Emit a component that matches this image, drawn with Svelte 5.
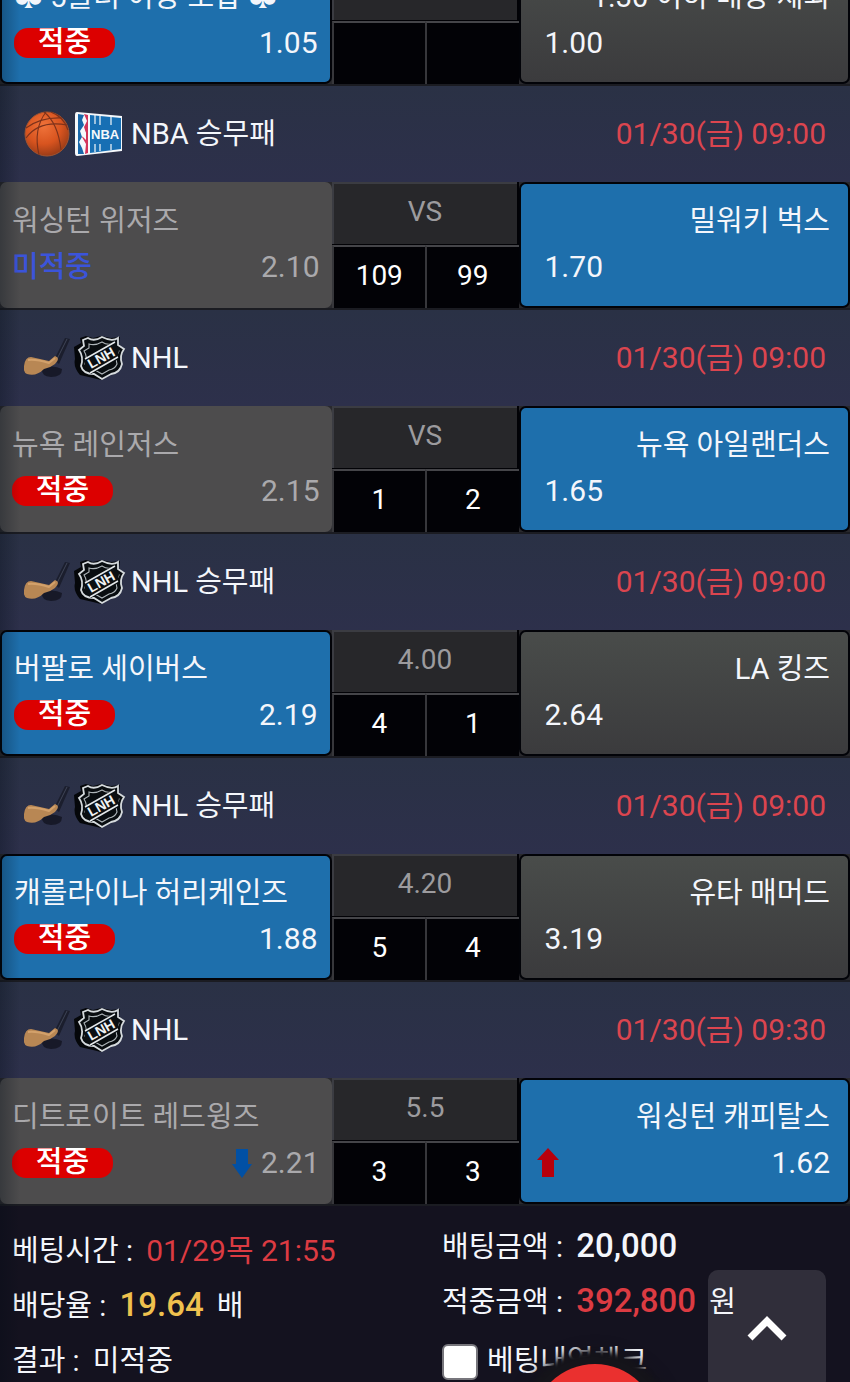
<script lang="ts">
    type Side = {
        name: string;
        odds: string;
        state: 'picked' | 'idle' | 'dimmed';
        result?: 'hit' | 'miss';
        trend?: 'up' | 'down';
    };

    type Game = {
        league?: string;
        sport?: 'basketball' | 'hockey';
        time?: string;
        home: Side;
        away: Side;
        middle: string;
        score: [string, string];
    };

    const games: Game[] = [
        {
            home: { name: '♣ 5폴더 이상 조합 ♣', odds: '1.05', state: 'picked', result: 'hit' },
            away: { name: '1.30 이하 배당 제외', odds: '1.00', state: 'idle' },
            middle: '',
            score: ['', '']
        },
        {
            league: 'NBA 승무패',
            sport: 'basketball',
            time: '01/30(금) 09:00',
            home: { name: '워싱턴 위저즈', odds: '2.10', state: 'dimmed', result: 'miss' },
            away: { name: '밀워키 벅스', odds: '1.70', state: 'picked' },
            middle: 'VS',
            score: ['109', '99']
        },
        {
            league: 'NHL',
            sport: 'hockey',
            time: '01/30(금) 09:00',
            home: { name: '뉴욕 레인저스', odds: '2.15', state: 'dimmed', result: 'hit' },
            away: { name: '뉴욕 아일랜더스', odds: '1.65', state: 'picked' },
            middle: 'VS',
            score: ['1', '2']
        },
        {
            league: 'NHL 승무패',
            sport: 'hockey',
            time: '01/30(금) 09:00',
            home: { name: '버팔로 세이버스', odds: '2.19', state: 'picked', result: 'hit' },
            away: { name: 'LA 킹즈', odds: '2.64', state: 'idle' },
            middle: '4.00',
            score: ['4', '1']
        },
        {
            league: 'NHL 승무패',
            sport: 'hockey',
            time: '01/30(금) 09:00',
            home: { name: '캐롤라이나 허리케인즈', odds: '1.88', state: 'picked', result: 'hit' },
            away: { name: '유타 매머드', odds: '3.19', state: 'idle' },
            middle: '4.20',
            score: ['5', '4']
        },
        {
            league: 'NHL',
            sport: 'hockey',
            time: '01/30(금) 09:30',
            home: { name: '디트로이트 레드윙즈', odds: '2.21', state: 'dimmed', result: 'hit', trend: 'down' },
            away: { name: '워싱턴 캐피탈스', odds: '1.62', state: 'picked', trend: 'up' },
            middle: '5.5',
            score: ['3', '3']
        }
    ];

    let checked = $state(false);

    function scrollToTop() {
        window.scrollTo({ top: 0, behavior: 'smooth' });
    }
</script>

{#snippet arrow(trend: 'up' | 'down')}
    <svg class="arrow" width="22" height="30" viewBox="0 0 22 30" aria-hidden="true">
        {#if trend === 'up'}
            <path d="M11 0 L22 12 H17 V29 H5 V12 H0 Z" fill="#b8000c" />
        {:else}
            <path d="M5 1 H17 V16 H21 L11 30 L1 16 H5 Z" fill="#0150a4" />
        {/if}
    </svg>
{/snippet}

{#snippet sportIcons(sport: 'basketball' | 'hockey')}
    {#if sport === 'basketball'}
        <svg width="46" height="46" viewBox="0 0 46 46" aria-hidden="true">
            <defs>
                <radialGradient id="ball" cx="42%" cy="32%" r="68%">
                    <stop offset="0" stop-color="#f0733a" />
                    <stop offset="0.6" stop-color="#d8541f" />
                    <stop offset="1" stop-color="#9c3c17" />
                </radialGradient>
            </defs>
            <circle cx="23" cy="23" r="22" fill="url(#ball)" stroke="#a35430" />
            <g fill="none" stroke="#7d321b" stroke-width="1.1">
                <path d="M2 17 Q17 6 38 7" />
                <path d="M20 1 Q34 12 37 39" />
                <path d="M22 1 Q9 18 15 44" />
                <path d="M2 27 Q15 9 43 14" />
                <path d="M27 1 Q40 6 44 19" />
            </g>
        </svg>
        <svg width="50" height="46" viewBox="0 0 50 46" aria-hidden="true">
            <path d="M3 1 L48 5 V40 L3 45 Q1 45 1 42 V4 Q1 1 3 1 Z" fill="#f5f8fb" />
            <path d="M4 3 L10 4 L8 9 L10 14 L6 20 L8 26 L5 31 L8 37 L10 43 L4 43 Z" fill="#1767aa" />
            <path d="M10 3 L14 4 V42 L11 43 L12 33 L8 26 L12 22 L10 16 L13 10 Z" fill="#d3345a" />
            <path d="M12 21 L8 25 L12 29 Z" fill="#f5f8fb" />
            <path d="M16 4 L47 7 V38 L16 42 Z" fill="#176fb4" />
            <path d="M21 4 V13 M26 5 V14 M37 6 V14 M21 33 V41 M26 33 V40 M37 33 V39" stroke="#f5f8fb" stroke-width="1.2" />
            <text x="17" y="28" class="nba-text">NBA</text>
        </svg>
    {:else}
        <svg width="46" height="46" viewBox="0 0 46 46" aria-hidden="true">
            <path d="M41 3 L46 4 L35 29 L30 25 Z" fill="#1b1e2d" />
            <path d="M43 4 L33 24" stroke="#3f4557" />
            <path d="M18 34 Q28 29 38 34 Q38 42 27 42 Q17 41 18 34 Z" fill="#171928" />
            <path d="M0 31 Q1 22 7 22 L25 26 L31 21 Q37 23 31 29 Q26 33 20 34 Q12 42 3 39 Q-1 37 0 31 Z" fill="#b88754" />
            <path d="M4 25 Q12 24 25 28 L31 23" fill="none" stroke="#d3a16b" stroke-width="2" />
        </svg>
        <svg width="52" height="46" viewBox="0 0 52 46" aria-hidden="true">
            <path d="M12 1 L19 3 L27 1 L37 3 L46 2 L45 9 L50 15 Q45 22 48 29 Q47 38 36 40 L27 45 L19 43 L6 40 Q-1 32 1 24 L0 12 L7 8 L6 3 Z" fill="#05070a" />
            <path d="M14 3 Q20 7 28 2 Q38 7 44 3 L44 10 L50 14 Q45 21 48 29 Q46 38 37 39 L28 44 L20 39 Q9 39 7 31 Q10 22 5 15 L10 11 L9 5 Z" fill="#090d10" stroke="#d5dadd" stroke-width="1.8" />
            <path d="M15 9 Q21 11 28 7 Q34 11 40 8 L40 13 L45 16 Q41 23 43 29 Q41 34 35 35 L28 39 L21 35 Q13 34 11 29 Q14 22 10 16 L15 13 Z" fill="none" stroke="#aeb5b9" stroke-width="1.1" />
            <path d="M11 24 L40 6 L45 15 L43 25 L17 39 L11 33 Z" fill="#0b0f12" />
            <path d="M11 24 L41 7 M16 38 L44 22" stroke="#e5e9eb" stroke-width="1.5" />
            <text x="17" y="34" transform="rotate(-29 17 34)" class="nhl-text">LNH</text>
        </svg>
    {/if}
{/snippet}

<main class="page">
    <section class="games">
        {#each games as game}
            <article class="game">
                {#if game.sport}
                    <header class="game-header">
                        <div class="icons">{@render sportIcons(game.sport)}</div>
                        <h2>{game.league}</h2>
                        <time>{game.time}</time>
                    </header>
                {/if}

                <div class="odds-row">
                    <div class="side home {game.home.state}">
                        <div class="name">{game.home.name}</div>
                        <div class="line">
                            {#if game.home.result === 'hit'}
                                <span class="hit">적중</span>
                            {:else if game.home.result === 'miss'}
                                <span class="miss">미적중</span>
                            {/if}
                            <span class="odds">
                                {#if game.home.trend}{@render arrow(game.home.trend)}{/if}
                                {game.home.odds}
                            </span>
                        </div>
                    </div>

                    <div class="center">
                        <div class="middle">{game.middle}</div>
                        <div class="score">{game.score[0]}</div>
                        <div class="score">{game.score[1]}</div>
                    </div>

                    <div class="side away {game.away.state}">
                        <div class="name">{game.away.name}</div>
                        <div class="line" class:moved={game.away.trend}>
                            {#if game.away.trend}{@render arrow(game.away.trend)}{/if}
                            <span class="odds">{game.away.odds}</span>
                        </div>
                    </div>
                </div>
            </article>
        {/each}
    </section>

    <footer class="summary">
        <div class="summary-left">
            <p>베팅시간 : <span class="red date">01/29목 21:55</span></p>
            <p>배당율 : <strong class="yellow">19.64</strong> <span>배</span></p>
            <p>결과 : <span>미적중</span></p>
        </div>
        <div class="summary-right">
            <p>배팅금액 : <strong>20,000</strong></p>
            <p>적중금액 : <strong class="red">392,800</strong> <span>원</span></p>
            <label>
                <input type="checkbox" bind:checked />
                베팅내역체크
            </label>
        </div>
    </footer>

    <button class="to-top" type="button" aria-label="맨 위로" onclick={scrollToTop}>
        <svg width="40" height="26" viewBox="0 0 40 26" aria-hidden="true">
            <path d="M3 22 L20 5 L37 22" fill="none" stroke="#fff" stroke-width="7" />
        </svg>
    </button>
    <button class="round" type="button" aria-label="메뉴"></button>
</main>

<style>
    :global(body) {
        background: #14121f;
    }

    .page {
        position: relative;
        height: 100vh;
        overflow: hidden;
        background: #14121f;
        color: #f4f6fb;
        font-family: Roboto, "Noto Sans CJK KR", sans-serif;
        font-size: 29px;
    }

    /* soft shade along the left screen edge */
    .page::after {
        content: '';
        position: absolute;
        inset: 0 auto 0 0;
        width: 20px;
        background: linear-gradient(90deg, rgba(0, 10, 20, 0.28), transparent);
        pointer-events: none;
    }

    /* the list is scrolled part way past its first row */
    .games {
        margin-top: -42px;
    }

    .game-header {
        display: flex;
        align-items: center;
        height: 96px;
        padding: 0 24px;
        background: linear-gradient(#2a3145, #2d304b);
    }

    .icons {
        display: flex;
        gap: 4px;
        width: 100px;
    }

    .icons svg {
        display: block;
        flex: none;
    }

    .nba-text {
        font: bold 13px "Liberation Sans", sans-serif;
        fill: #f5f8fb;
    }

    .nhl-text {
        font: bold 14px "Liberation Sans", sans-serif;
        fill: #f0f2f3;
    }

    h2 {
        margin: 0 0 0 7px;
        font-size: 29px;
        font-weight: 400;
        line-height: 38px;
    }

    time {
        margin-left: auto;
        color: #db454f;
        font-size: 30px;
        line-height: 38px;
    }

    .odds-row {
        display: grid;
        grid-template-columns: 39fr 22fr 39fr;
        height: 126px;
        border-bottom: 2px solid #1b1c22;
        background: #29292d;
    }

    .side {
        box-sizing: border-box;
        padding: 14px 12px 0;
        border: 2px solid #020308;
        border-radius: 7px;
        line-height: 46px;
        white-space: nowrap;
    }

    .picked {
        background: #1e6fac;
    }

    .idle {
        background: linear-gradient(#494c4a, #3b3b3d);
    }

    .dimmed {
        padding-top: 16px;
        border: 0;
        background: #4d4c4d;
        color: #aaa9ac;
    }

    .line {
        display: flex;
        align-items: center;
        justify-content: space-between;
        height: 46px;
    }

    .odds {
        font-size: 30px;
    }

    .away {
        padding-right: 18px;
        padding-left: 16px;
    }

    .away .name {
        text-align: right;
    }

    .away .odds {
        padding-left: 8px;
    }

    .home .odds {
        display: flex;
        align-items: center;
        gap: 8px;
    }

    .moved .odds {
        margin-left: auto;
    }

    .arrow {
        display: block;
    }

    .hit {
        width: 101px;
        height: 30px;
        border-radius: 14px;
        background: #dc0000;
        color: #fff;
        font-weight: 500;
        line-height: 28px;
        text-align: center;
    }

    .miss {
        color: #3b54da;
        font-weight: 500;
    }

    .center {
        display: grid;
        grid-template-columns: 1fr 1fr;
        grid-template-rows: 62px 1fr;
        background: #020206;
        font-size: 28px;
        text-align: center;
    }

    .middle {
        grid-column: 1 / -1;
        margin-right: 2px;
        border-top: 2px solid #3b3c42;
        border-left: 2px solid #3b3c42;
        background: #27272a;
        color: #9c9b9e;
        line-height: 56px;
    }

    .score {
        margin-top: 1px;
        border-top: 2px solid #454549;
        border-left: 2px solid #37373b;
        color: #fff;
        line-height: 58px;
    }

    .summary {
        display: grid;
        grid-template-columns: 52fr 48fr;
    }

    .summary-left {
        padding: 18px 12px 0;
    }

    .summary-right {
        padding-top: 14px;
    }

    .summary p {
        margin: 0;
        line-height: 55px;
        white-space: nowrap;
    }

    .summary span,
    .summary strong {
        margin-left: 6px;
        line-height: 1;
    }

    .summary .date {
        font-size: 30px;
    }

    .summary strong {
        font-size: 33px;
        font-weight: 500;
    }

    .summary .red {
        color: #dc3b42;
    }

    .summary .yellow {
        color: #efc14e;
    }

    label {
        display: flex;
        align-items: center;
        gap: 9px;
        height: 55px;
    }

    input {
        appearance: none;
        width: 36px;
        height: 36px;
        margin: 8px 0 0;
        border: 2px solid #77767c;
        border-radius: 6px;
        background: #fff;
    }

    input:checked {
        background: #1e6fac;
    }

    .to-top {
        position: absolute;
        right: 24px;
        bottom: -8px;
        width: 118px;
        height: 120px;
        padding: 0;
        border: 0;
        border-radius: 10px;
        background: rgba(255, 255, 255, 0.12);
    }

    .round {
        position: absolute;
        bottom: -108px;
        left: 70%;
        width: 126px;
        height: 126px;
        margin-left: -63px;
        padding: 0;
        border: 0;
        border-radius: 50%;
        background: #ea302f;
        box-shadow: 0 0 4px 12px #15141a, 0 0 12px 16px rgba(20, 19, 26, 0.8);
    }
</style>
